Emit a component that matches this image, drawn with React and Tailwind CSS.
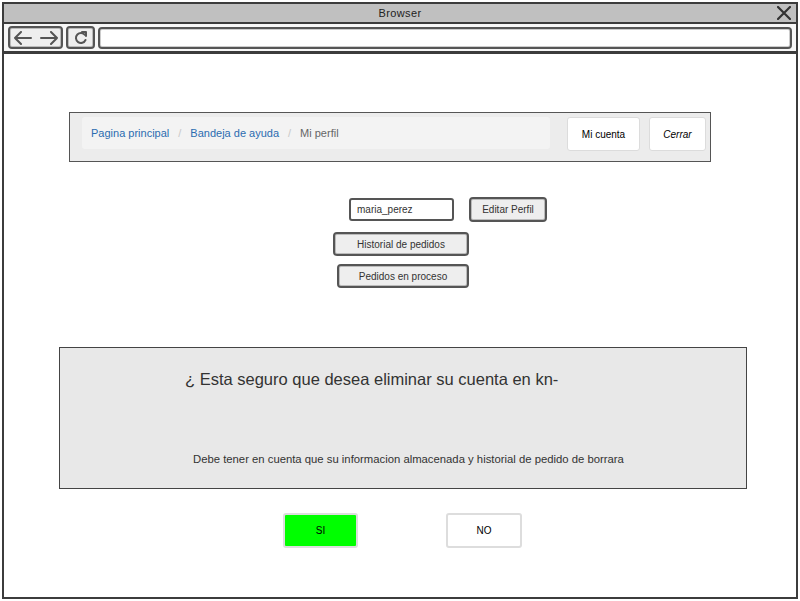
import React from "react";

const font = { fontFamily: '"Liberation Sans", Arial, sans-serif' };

function SketchBtn({ className = "", children }) {
  return (
    <div
      className={
        "flex items-center justify-center rounded-[4px] border-2 border-[#555] bg-[#eeeeee] text-[#333] shadow-[inset_0_0_0_1px_#bbb] " +
        className
      }
    >
      {children}
    </div>
  );
}

export default function App() {
  return (
    <div className="w-[800px] h-[601px] bg-white p-[2px]" style={font}>
      <div className="w-[796px] h-[597px] border-2 border-[#3c3c3c] flex flex-col">
        {/* title bar */}
        <div className="h-[18px] bg-[#c0c0c0] relative flex items-center justify-center border-b-2 border-[#3c3c3c] box-content">
          <span className="text-[11px] text-[#222] tracking-[0.4px]">Browser</span>
          <svg className="absolute right-[5px] top-[2px]" width="14" height="14" viewBox="0 0 14 14">
            <path d="M1 1 L13 13 M13 1 L1 13" stroke="#333" strokeWidth="2.2" strokeLinecap="round" />
          </svg>
        </div>
        {/* toolbar */}
        <div className="h-[27px] bg-[#f7f7f7] flex items-center gap-[3px] px-[4px] border-b-[3px] border-[#3c3c3c] box-content">
          <SketchBtn className="w-[55px] h-[23px] gap-[6px]">
            <svg width="20" height="14" viewBox="0 0 20 14">
              <path d="M18 7 H2 M8 1 L2 7 L8 13" stroke="#555" strokeWidth="2" fill="none" strokeLinecap="round" strokeLinejoin="round" />
            </svg>
            <svg width="20" height="14" viewBox="0 0 20 14">
              <path d="M2 7 H18 M12 1 L18 7 L12 13" stroke="#555" strokeWidth="2" fill="none" strokeLinecap="round" strokeLinejoin="round" />
            </svg>
          </SketchBtn>
          <SketchBtn className="w-[29px] h-[23px]">
            <svg width="14" height="14" viewBox="0 0 14 14">
              <path d="M11 4 A5 5 0 1 0 11.5 9" stroke="#555" strokeWidth="2" fill="none" strokeLinecap="round" />
              <path d="M8 1 L12 1 L12 5" stroke="#555" strokeWidth="2" fill="none" strokeLinecap="round" strokeLinejoin="round" />
            </svg>
          </SketchBtn>
          <div className="flex-1 h-[22px] rounded-[4px] border-2 border-[#555] bg-white shadow-[inset_0_0_0_1px_#ccc]" />
        </div>
        {/* content */}
        <div className="flex-1 flex flex-col">
          {/* breadcrumb panel */}
          <div className="ml-[65px] mt-[58px] w-[642px] h-[50px] border border-[#555] bg-[#ececec] flex items-start pt-[4px]">
            <div className="ml-[12px] w-[468px] h-[32px] rounded-[3px] bg-[#f3f3f3] flex items-center pl-[9px] text-[11px]">
              <span className="text-[#2b6cb0]">Pagina principal</span>
              <span className="text-[#c8c8c8] mx-[9px]">/</span>
              <span className="text-[#2b6cb0]">Bandeja de ayuda</span>
              <span className="text-[#c8c8c8] mx-[9px]">/</span>
              <span className="text-[#666]">Mi perfil</span>
            </div>
            <div className="ml-[17px] w-[73px] h-[34px] rounded-[3px] bg-white border border-[#dcdcdc] flex items-center justify-center text-[10px] text-black">
              Mi cuenta
            </div>
            <div className="ml-[9px] w-[57px] h-[34px] rounded-[3px] bg-white border border-[#dcdcdc] flex items-center justify-center text-[10px] text-black italic">
              Cerrar
            </div>
          </div>
          {/* controls */}
          <div className="mt-[35px] flex items-center">
            <div className="ml-[345px] w-[105px] h-[23px] rounded-[3px] border-2 border-[#555] bg-white flex items-center pl-[6px] text-[10px] text-[#333]">
              maria_perez
            </div>
            <SketchBtn className="ml-[15px] w-[78px] h-[25px] text-[10px]">Editar Perfil</SketchBtn>
          </div>
          <div className="mt-[10px] flex">
            <SketchBtn className="ml-[329px] w-[136px] h-[24px] text-[10px]">Historial de pedidos</SketchBtn>
          </div>
          <div className="mt-[8px] flex">
            <SketchBtn className="ml-[333px] w-[132px] h-[24px] text-[10px]">Pedidos en proceso</SketchBtn>
          </div>
          {/* dialog */}
          <div className="ml-[55px] mt-[59px] w-[688px] h-[142px] border border-[#444] bg-[#e8e8e8] flex flex-col">
            <div className="pl-[125px] mt-[19px] text-[16.5px] text-[#333] leading-[24px]">
              ¿ Esta seguro que desea eliminar su cuenta en kn-
            </div>
            <div className="pl-[133px] mt-[61px] text-[11.3px] text-[#333] leading-[14px]">
              Debe tener en cuenta que su informacion almacenada y historial de pedido de borrara
            </div>
          </div>
          {/* buttons */}
          <div className="mt-[24px] flex">
            <div className="ml-[279px] w-[75px] h-[35px] rounded-[3px] bg-[#00ff00] border-2 border-[#dddddd] flex items-center justify-center text-[10px] text-black">
              SI
            </div>
            <div className="ml-[88px] w-[76px] h-[35px] rounded-[3px] bg-white border-2 border-[#dddddd] flex items-center justify-center text-[10px] text-black">
              NO
            </div>
          </div>
        </div>
      </div>
    </div>
  );
}
